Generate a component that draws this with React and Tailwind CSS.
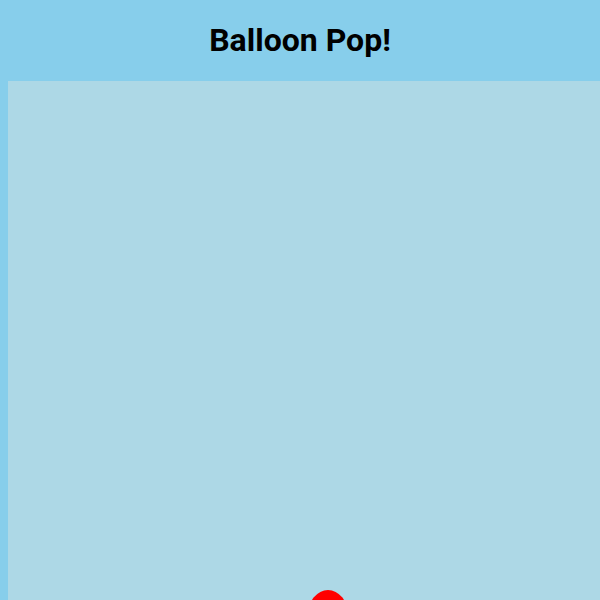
export default function App() {
  return (
    <div className="h-[600px] w-[600px] overflow-hidden bg-[#87ceeb] font-['Roboto',sans-serif]">
      <h1 className="my-[0.67em] text-center text-[32px] font-bold leading-[normal] text-black">Balloon Pop!</h1>
      <div className="relative ml-2 h-[600px] w-[600px] bg-[#add8e6]">
        <div className="absolute left-[300px] top-[509px] h-[50px] w-[40px] rounded-[50%] bg-[#ff0000]" />
      </div>
    </div>
  )
}
